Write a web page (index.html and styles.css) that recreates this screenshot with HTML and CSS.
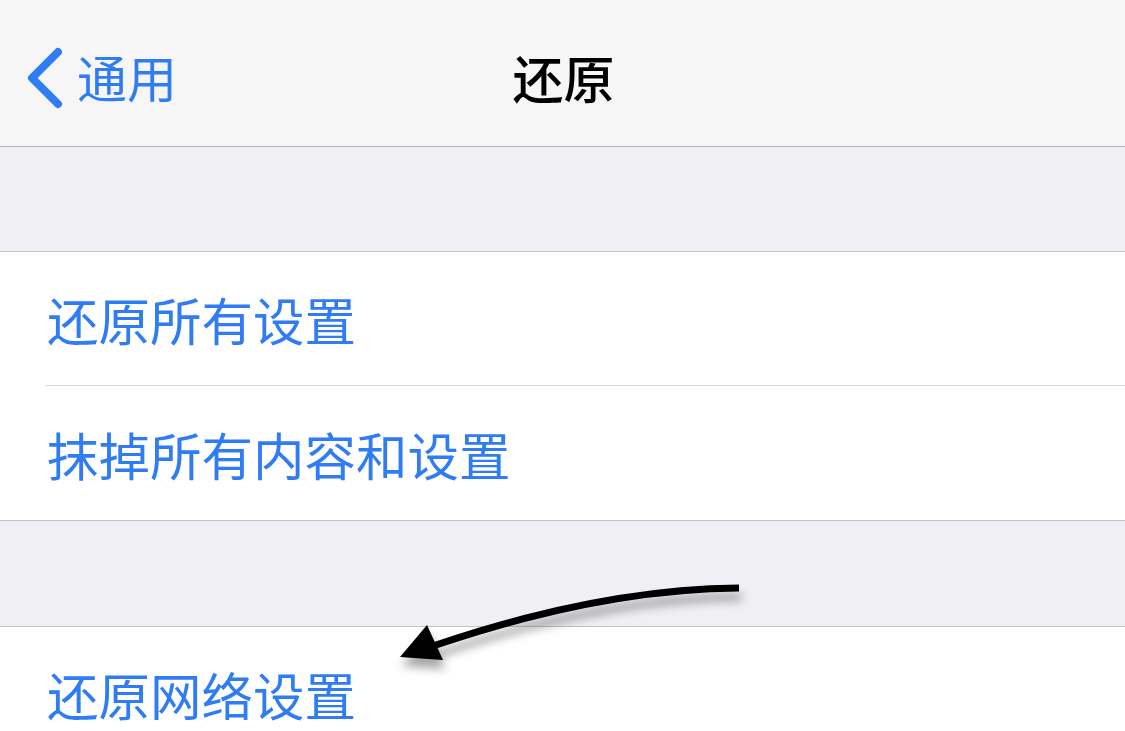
FILE: index.html
```
<!DOCTYPE html>
<html lang="zh-CN">
<head>
    <meta charset="UTF-8">
    <meta name="viewport" content="width=device-width, initial-scale=1.0">
    <title>还原</title>
    <link rel="stylesheet" href="styles.css">
</head>
<body>
    <div class="screen">
        <header class="navbar">
            <a class="back" href="#">
                <svg class="chevron" width="40" height="64" viewBox="0 0 40 64">
                    <path d="M34 6 L8 32 L34 58" fill="none" stroke="#2f7cf3" stroke-width="8" stroke-linecap="round" stroke-linejoin="round"/>
                </svg>
                <span>通用</span>
            </a>
            <h1 class="title">还原</h1>
        </header>

        <div class="spacer"></div>

        <ul class="group">
            <li class="row">还原所有设置</li>
            <li class="row row-tall">抹掉所有内容和设置</li>
        </ul>

        <div class="spacer spacer-tall"></div>

        <ul class="group">
            <li class="row">还原网络设置</li>
        </ul>

        <!-- annotation arrow drawn over the screenshot -->
        <svg class="arrow" width="1125" height="731" viewBox="0 0 1125 731">
            <path d="M739 588 Q600 589 433 646" fill="none" stroke="#000" stroke-width="7" stroke-linecap="butt"/>
            <polygon points="400,657 427,625 443,660" fill="#000"/>
        </svg>
    </div>
</body>
</html>
```
FILE: styles.css
```
body {
    margin: 0;
    padding: 0;
    font-family: "Noto Sans CJK SC", "Noto Sans", sans-serif;
    background-color: #efeff4;
    overflow: hidden;
}

.screen {
    position: relative;
    width: 1125px;
    height: 731px;
    overflow: hidden;
}

.navbar {
    height: 146px;
    background-color: #f6f6f7;
    border-bottom: 1px solid #b4b4b8;
    display: flex;
    align-items: center;
    justify-content: center;
    position: relative;
}

.back {
    position: absolute;
    left: 24px;
    top: 46px;
    display: flex;
    align-items: center;
    gap: 13px;
    color: #2f7cf3;
    text-decoration: none;
    font-size: 50px;
    line-height: 64px;
}

.back span {
    position: relative;
    top: -2px;
}

.title {
    margin: 0;
    font-size: 51px;
    font-weight: 500;
    color: #000;
    position: relative;
    top: 4px;
    left: 1px;
}

.spacer {
    height: 104px;
    background-color: #efeff4;
    border-bottom: 1px solid #c4c4c8;
}

.spacer-tall {
    height: 105px;
}

.group {
    list-style: none;
    margin: 0;
    padding: 0 0 0 46px;
    background-color: #fff;
    border-bottom: 1px solid #c4c4c8;
}

.row {
    height: 133px;
    display: flex;
    align-items: center;
    color: #2f7cf3;
    font-size: 51.5px;
    padding-left: 1px;
    border-bottom: 1px solid #d6d6da;
}

.row-tall {
    height: 134px;
}

.row:last-child {
    border-bottom: none;
}

.arrow {
    position: absolute;
    left: 0;
    top: 0;
    filter: drop-shadow(2px 9px 5px rgba(0, 0, 0, 0.35));
}
```
